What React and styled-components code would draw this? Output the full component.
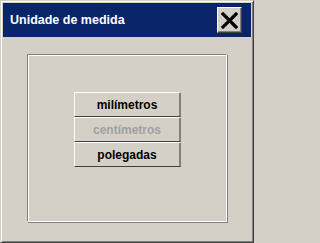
import styled, { createGlobalStyle } from "styled-components";

const GlobalStyle = createGlobalStyle`
  html, body {
    margin: 0;
    padding: 0;
    background: #d4d0c8;
  }
  * {
    box-sizing: border-box;
  }
`;

const units = [
  { label: "milímetros", disabled: false },
  { label: "centímetros", disabled: true },
  { label: "polegadas", disabled: false },
];

const App = () => {
  return (
    <>
      <GlobalStyle />
      <Window>
        <TitleBar>
          <Title>Unidade de medida</Title>
          <CloseButton aria-label="Fechar">
            <svg width="17" height="17" viewBox="0 0 17 17">
              <path
                d="M2 2 L15 15 M15 2 L2 15"
                stroke="#000"
                strokeWidth="3.2"
                strokeLinecap="square"
                fill="none"
              />
            </svg>
          </CloseButton>
        </TitleBar>
        <Body>
          <Group>
            <ButtonStack>
              {units.map((u) => (
                <UnitButton key={u.label} disabled={u.disabled}>
                  {u.label}
                </UnitButton>
              ))}
            </ButtonStack>
          </Group>
        </Body>
      </Window>
    </>
  );
};

/**
 * styles
 */
const Window = styled.div`
  width: 254px;
  height: 243px;
  display: flex;
  flex-direction: column;
  padding: 1px;
  background: #d4d0c8;
  border-top: 1px solid #d4d0c8;
  border-left: 1px solid #d4d0c8;
  border-right: 1px solid #404040;
  border-bottom: 1px solid #404040;
  box-shadow: inset 1px 1px 0 #ffffff, inset -1px -1px 0 #808080;
  font-family: "Liberation Sans", Arial, sans-serif;
`;

const TitleBar = styled.div`
  height: 34px;
  margin: 1px 1px 0 1px;
  flex-shrink: 0;
  display: flex;
  align-items: center;
  justify-content: space-between;
  padding: 0 9px 0 7px;
  background: #0a246a;
`;

const Title = styled.span`
  color: #ffffff;
  font-size: 12.5px;
  font-weight: bold;
`;

const CloseButton = styled.button`
  width: 25px;
  height: 26px;
  padding: 0;
  display: flex;
  align-items: center;
  justify-content: center;
  background: #d4d0c8;
  border-top: 1px solid #ffffff;
  border-left: 1px solid #ffffff;
  border-right: 1px solid #404040;
  border-bottom: 1px solid #404040;
  box-shadow: inset -1px -1px 0 #808080;
`;

const Body = styled.div`
  flex: 1;
  padding: 17px 25px 19px 25px;
  display: flex;
`;

const Group = styled.div`
  flex: 1;
  display: flex;
  justify-content: center;
  align-items: flex-start;
  padding-top: 37px;
  border-top: 1px solid #808080;
  border-left: 1px solid #808080;
  border-right: 1px solid #ffffff;
  border-bottom: 1px solid #ffffff;
  box-shadow: inset 1px 1px 0 #ffffff, 1px 1px 0 #808080;
`;

const ButtonStack = styled.div`
  width: 107px;
  display: flex;
  flex-direction: column;
`;

const UnitButton = styled.button`
  height: 25px;
  padding: 0;
  background: #d4d0c8;
  font-family: "Liberation Sans", Arial, sans-serif;
  font-size: 12px;
  font-weight: bold;
  color: ${(p) => (p.disabled ? "#a0a0a0" : "#000000")};
  border-top: 1px solid #ffffff;
  border-left: 1px solid #ffffff;
  border-right: 1px solid #808080;
  border-bottom: 1px solid #404040;
  box-shadow: inset -1px 0 0 #808080;
`;

export default App;
